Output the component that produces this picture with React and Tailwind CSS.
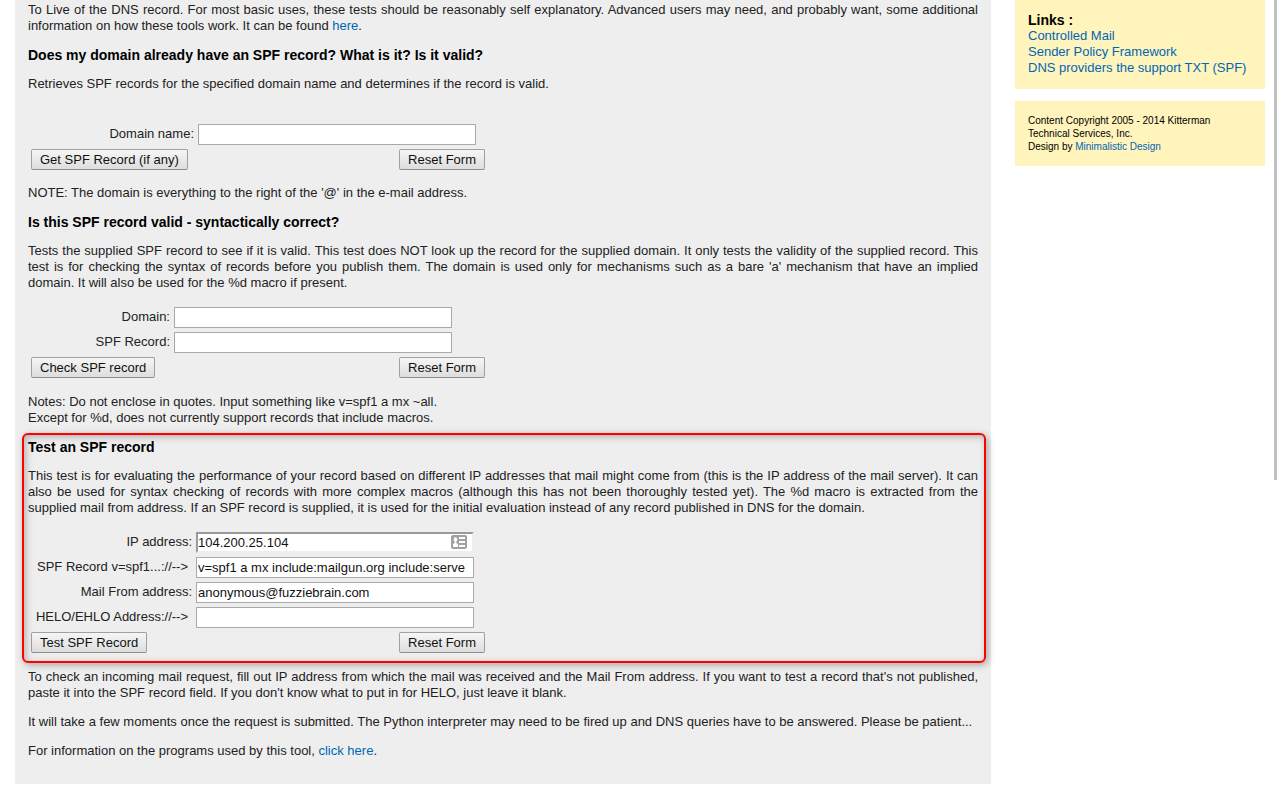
import { useState } from "react";

const Title = ({ children }) => (
  <h2 className="text-[14px] leading-4 font-bold text-black">{children}</h2>
);

const Text = ({ children, className = "" }) => (
  <p className={`text-justify ${className}`}>{children}</p>
);

const Link = ({ children }) => (
  <a href="#" className="text-[#0066b3] hover:underline">
    {children}
  </a>
);

const Button = ({ children, type }) => (
  <button
    type={type}
    className="h-[21px] rounded-[2px] border border-[#a0a0a0] border-b-[#8c8c8c] bg-linear-to-b from-[#f6f6f6] to-[#dddddd] px-2 text-[13px] leading-4 text-[#111111]"
  >
    {children}
  </button>
);

function Field({ id, label, labelWidth, arrow, value = "", card }) {
  const [text, setText] = useState(value);

  return (
    <div className="flex items-start">
      <label htmlFor={id} className={`${labelWidth} shrink-0 text-right whitespace-nowrap pt-0.5 ${arrow ? "pr-2" : "pr-1"}`}>
        {label}
      </label>
      <div className="relative">
        <input
          id={id}
          type="text"
          value={text}
          onChange={(e) => setText(e.target.value)}
          className={`block h-[21px] w-[278px] bg-white text-[13px] text-[#111111] ${
            card ? "border-2 border-[#9a9a9a] border-r-[#eeeeee] border-b-[#eeeeee]" : "border border-[#a9a9a9] px-px"
          }`}
        />
        {card && <CardIcon />}
      </div>
    </div>
  );
}

// Contact card autofill marker
function CardIcon() {
  return (
    <svg className="absolute top-[3px] right-[7px]" width="16" height="14" viewBox="0 0 16 14">
      <rect width="16" height="14" rx="2" fill="#a0a0a0" />
      <ellipse cx="4.5" cy="4.500" rx="1.800" ry="2.200" fill="#fff" />
      <path d="M3.800 6h1.400v2L7 9v3H2V9l1.800-1z" fill="#fff" />
      <path d="M8 2h6v2H8zM8 6h6v2H8zM8 10h6v2H8z" fill="#fff" />
    </svg>
  );
}

function RecordForm({ submit, children, className = "" }) {
  return (
    <form className={`flex flex-col gap-1 ${className}`} onSubmit={(e) => e.preventDefault()}>
      {children}
      <div className="flex w-[457px] max-w-full justify-between pl-[3px]">
        <Button type="submit">{submit}</Button>
        <Button type="reset">Reset Form</Button>
      </div>
    </form>
  );
}

function Sidebar() {
  return (
    <aside className="w-[250px] shrink-0">
      <div className="bg-[#fff4bc] px-[13px] pt-3 pb-[13px]">
        <h3 className="text-[14px] leading-4 font-bold text-black">Links :</h3>
        <ul>
          <li><Link>Controlled Mail</Link></li>
          <li><Link>Sender Policy Framework</Link></li>
          <li><Link>DNS providers the support TXT (SPF)</Link></li>
        </ul>
      </div>
      <div className="mt-3 bg-[#fff4bc] p-[13px] text-[10px] leading-[13px] text-black">
        <p>Content Copyright 2005 - 2014 Kitterman Technical Services, Inc.</p>
        <p>Design by <Link>Minimalistic Design</Link></p>
      </div>
    </aside>
  );
}

export default function App() {
  return (
    <div className="flex items-start bg-white pl-[15px] font-['Liberation_Sans',Arial,sans-serif] text-[13px] leading-4 text-[#222222]">
      <main className="min-w-0 flex-1 bg-[#eeeeee] px-[13px] pt-0.5 pb-[25px]">
        <Text>
          To Live of the DNS record. For most basic uses, these tests should be reasonably self explanatory. Advanced
          users may need, and probably want, some additional information on how these tools work. It can be found{" "}
          <Link>here</Link>.
        </Text>

        <section className="mt-[13px]">
          <Title>Does my domain already have an SPF record? What is it? Is it valid?</Title>
          <Text className="mt-[13px]">
            Retrieves SPF records for the specified domain name and determines if the record is valid.
          </Text>
          <RecordForm submit="Get SPF Record (if any)" className="mt-8">
            <Field id="lookup-domain" label="Domain name:" labelWidth="w-[170px]" />
          </RecordForm>
          <Text className="mt-[15px]">NOTE: The domain is everything to the right of the '@' in the e-mail address.</Text>
        </section>

        <section className="mt-[13px]">
          <Title>Is this SPF record valid - syntactically correct?</Title>
          <Text className="mt-[13px]">
            Tests the supplied SPF record to see if it is valid. This test does NOT look up the record for the supplied
            domain. It only tests the validity of the supplied record. This test is for checking the syntax of records
            before you publish them. The domain is used only for mechanisms such as a bare 'a' mechanism that have an
            implied domain. It will also be used for the %d macro if present.
          </Text>
          <RecordForm submit="Check SPF record" className="mt-4">
            <Field id="check-domain" label="Domain:" labelWidth="w-[146px]" />
            <Field id="check-record" label="SPF Record:" labelWidth="w-[146px]" />
          </RecordForm>
          <Text className="mt-4">
            Notes: Do not enclose in quotes. Input something like v=spf1 a mx ~all.
            <br />
            Except for %d, does not currently support records that include macros.
          </Text>
        </section>

        <section className="relative mt-[13px]">
          <Title>Test an SPF record</Title>
          <Text className="mt-[13px]">
            This test is for evaluating the performance of your record based on different IP addresses that mail might
            come from (this is the IP address of the mail server). It can also be used for syntax checking of records
            with more complex macros (although this has not been thoroughly tested yet). The %d macro is extracted from
            the supplied mail from address. If an SPF record is supplied, it is used for the initial evaluation instead
            of any record published in DNS for the domain.
          </Text>
          <RecordForm submit="Test SPF Record" className="mt-4">
            <Field id="test-ip" label="IP address:" labelWidth="w-[168px]" value="104.200.25.104" card />
            <Field
              id="test-record"
              label="SPF Record v=spf1...://-->"
              labelWidth="w-[168px]"
              arrow
              value="v=spf1 a mx include:mailgun.org include:serve"
            />
            <Field id="test-from" label="Mail From address:" labelWidth="w-[168px]" value="anonymous@fuzziebrain.com" />
            <Field id="test-helo" label="HELO/EHLO Address://-->" labelWidth="w-[168px]" arrow />
          </RecordForm>
          {/* Highlight frame */}
          <div className="pointer-events-none absolute -top-1.5 -right-2 -bottom-2.5 -left-1.5 rounded-md border-2 border-[#ff0000] shadow-[2px_2px_7px_rgba(0,0,0,0.3),inset_2px_2px_7px_rgba(0,0,0,0.25)]" />
        </section>

        <Text className="mt-4">
          To check an incoming mail request, fill out IP address from which the mail was received and the Mail From
          address. If you want to test a record that's not published, paste it into the SPF record field. If you don't
          know what to put in for HELO, just leave it blank.
        </Text>
        <Text className="mt-[13px]">
          It will take a few moments once the request is submitted. The Python interpreter may need to be fired up and
          DNS queries have to be answered. Please be patient...
        </Text>
        <Text className="mt-[13px]">
          For information on the programs used by this tool, <Link>click here</Link>.
        </Text>
      </main>
      <div className="w-6 shrink-0" />
      <Sidebar />
      <div className="mr-[3px] ml-[9px] h-[480px] w-[3px] shrink-0 bg-[#c0c0c0]" />
    </div>
  );
}
